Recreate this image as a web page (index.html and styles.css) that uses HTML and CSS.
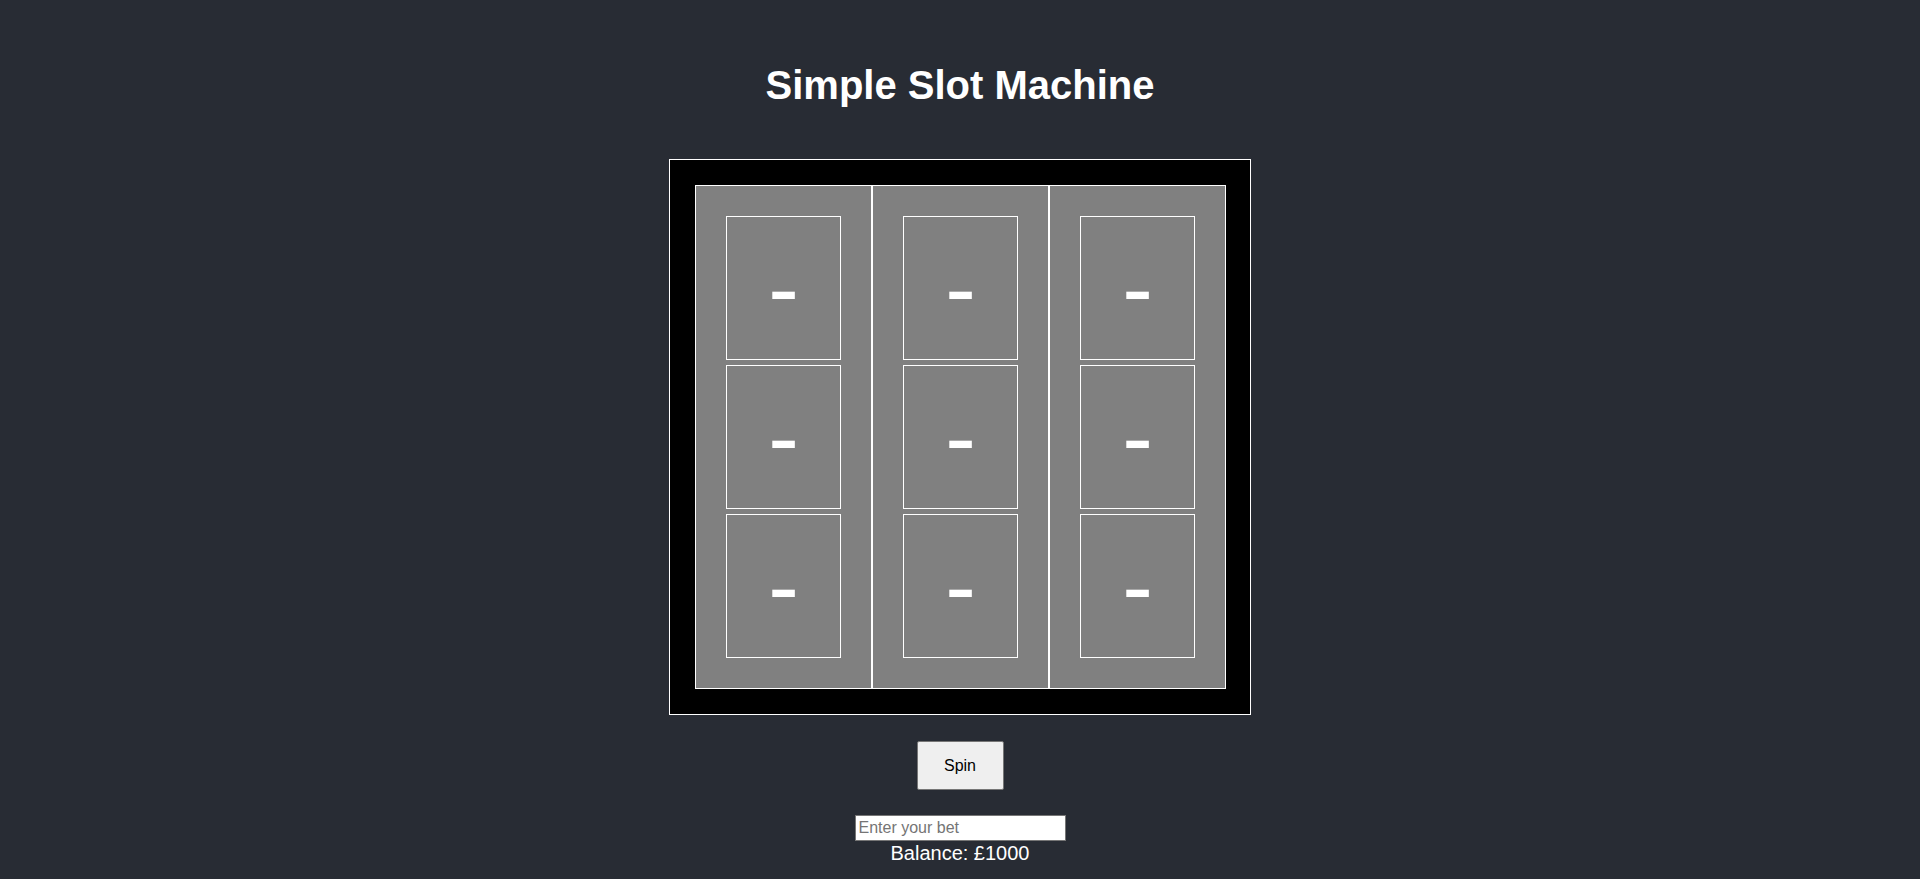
FILE: index.html
```html
<!DOCTYPE html>
<html lang="en">
<head>
<meta charset="utf-8">
<title>Simple Slot Machine</title>
<link rel="stylesheet" href="styles.css">
</head>
<body>
<div class="app">
  <h1 class="title">Simple Slot Machine</h1>
  <div class="machine">
    <div class="reel">
      <div class="symbol"><span class="glyph">-</span></div>
      <div class="symbol"><span class="glyph">-</span></div>
      <div class="symbol"><span class="glyph">-</span></div>
    </div>
    <div class="reel">
      <div class="symbol"><span class="glyph">-</span></div>
      <div class="symbol"><span class="glyph">-</span></div>
      <div class="symbol"><span class="glyph">-</span></div>
    </div>
    <div class="reel">
      <div class="symbol"><span class="glyph">-</span></div>
      <div class="symbol"><span class="glyph">-</span></div>
      <div class="symbol"><span class="glyph">-</span></div>
    </div>
  </div>
  <button class="spin" type="button">Spin</button>
  <input class="bet" type="text" placeholder="Enter your bet">
  <div class="balance">Balance: £1000</div>
</div>
</body>
</html>
```
FILE: styles.css
```css
html, body {
  margin: 0;
  padding: 0;
  background: #282c34;
}
body {
  font-family: "Liberation Sans", Arial, sans-serif;
  color: #ffffff;
}
.app {
  display: flex;
  flex-direction: column;
  align-items: center;
  min-height: 879px;
}
.title {
  margin: 62px 0 51px;
  font-size: 40px;
  line-height: 46px;
  font-weight: bold;
}
.machine {
  display: flex;
  background: #000000;
  border: 1px solid #ffffff;
  padding: 25px 24px 25px 25px;
}
.reel {
  display: flex;
  flex-direction: column;
  gap: 5px;
  width: 177px;
  box-sizing: border-box;
  padding: 30px;
  background: #808080;
  border: 1px solid #ffffff;
}
.symbol {
  display: flex;
  align-items: center;
  justify-content: center;
  width: 115px;
  height: 144px;
  box-sizing: border-box;
  border: 1px solid #ffffff;
  color: #ffffff;
}
.glyph {
  font-family: "Liberation Sans", Arial, sans-serif;
  font-size: 92px;
  line-height: 1;
  margin-top: -1px;
}
.spin {
  margin-top: 26px;
  width: 87px;
  height: 49px;
  box-sizing: border-box;
  background: #efefef;
  border: 1px solid #767676;
  border-radius: 2px;
  font-family: "Liberation Sans", Arial, sans-serif;
  font-size: 16px;
  color: #000000;
  padding: 0;
}
.bet {
  margin-top: 25px;
  width: 211px;
  height: 26px;
  box-sizing: border-box;
  border: 1px solid #767676;
  background: #ffffff;
  padding: 0 3px;
  font-family: "Liberation Sans", Arial, sans-serif;
  font-size: 16px;
  color: #000000;
  outline: none;
}
.bet::placeholder {
  color: #757575;
}
.balance {
  padding-top: 1px;
  font-size: 20px;
  line-height: 23px;
}
```
